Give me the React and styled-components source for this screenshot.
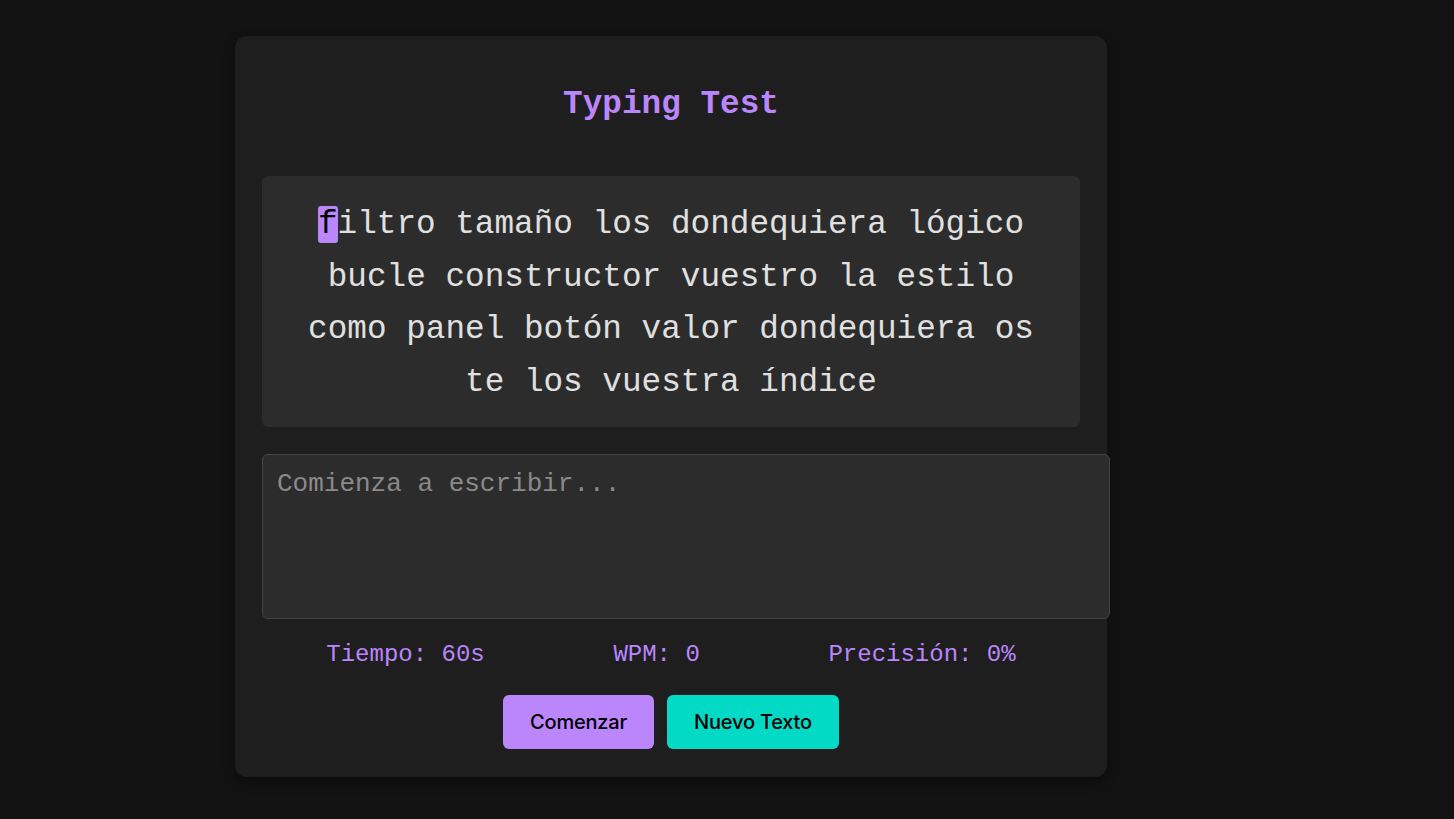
import React, { useState } from 'react';
import styled, { createGlobalStyle } from 'styled-components';

const GlobalStyle = createGlobalStyle`
  body {
    margin: 0;
    background-color: #121212;
    font-family: "Liberation Mono", "Courier New", monospace;
  }
`;

const Page = styled.div`
  display: flex;
  justify-content: center;
  padding: 36px 112px 42px 0; /* card sits a little left of centre */
`;

const Card = styled.div`
  width: 818px;
  padding: 0 27px 28px;
  background-color: #1e1e1e;
  border-radius: 12px;
  box-shadow: 0 4px 12px rgba(0, 0, 0, 0.35);
  display: flex;
  flex-direction: column;
`;

const Title = styled.h1`
  margin: 50px 0 53px;
  text-align: center;
  font-size: 32.7px;
  font-weight: bold;
  color: #bb86fc;
  line-height: 37px;
`;

const Passage = styled.div`
  background-color: #2c2c2c;
  border-radius: 6px;
  padding: 23px 20px 18px;
  text-align: center;
  font-size: 32.7px;
  line-height: 52.5px;
  color: #e0e0e0;
`;

const Current = styled.span`
  background-color: #bb86fc;
  color: #000;
  border-radius: 3px;
`;

const Input = styled.textarea`
  margin-top: 27px;
  width: 100%;
  height: 135px;
  padding: 14px;
  background-color: #2c2c2c;
  border: 1px solid #444;
  border-radius: 6px;
  color: #e0e0e0;
  font-family: "Liberation Mono", "Courier New", monospace;
  font-size: 26px;
  resize: none;
  outline: none;

  &::placeholder {
    color: #8a8a8a;
  }
`;

const Stats = styled.div`
  display: flex;
  justify-content: space-around;
  margin-top: 22px;
  font-size: 24px;
  line-height: 27px;
  color: #bb86fc;
`;

const Buttons = styled.div`
  display: flex;
  justify-content: center;
  gap: 13px;
  margin-top: 27px;
`;

const Button = styled.button`
  height: 54px;
  padding: 0 27px;
  border: none;
  border-radius: 6px;
  background-color: ${({ $variant }) => ($variant === 'teal' ? '#03dac6' : '#bb86fc')};
  color: #000;
  font-family: Inter, "Liberation Sans", sans-serif;
  font-size: 20px;
  font-weight: 500;
  letter-spacing: -0.2px;
  cursor: pointer;
`;

const words = 'filtro tamaño los dondequiera lógico bucle constructor vuestro la estilo como panel botón valor dondequiera os te los vuestra índice';

export default function App() {
  const [typed, setTyped] = useState('');

  return (
    <>
      <GlobalStyle />
      <Page>
        <Card>
          <Title>Typing Test</Title>
          <Passage>
            <Current>{words[0]}</Current>
            {words.slice(1)}
          </Passage>
          <Input
            placeholder="Comienza a escribir..."
            value={typed}
            onChange={(e) => setTyped(e.target.value)}
          />
          <Stats>
            <span>Tiempo: 60s</span>
            <span>WPM: 0</span>
            <span>Precisión: 0%</span>
          </Stats>
          <Buttons>
            <Button>Comenzar</Button>
            <Button $variant="teal">Nuevo Texto</Button>
          </Buttons>
        </Card>
      </Page>
    </>
  );
}
